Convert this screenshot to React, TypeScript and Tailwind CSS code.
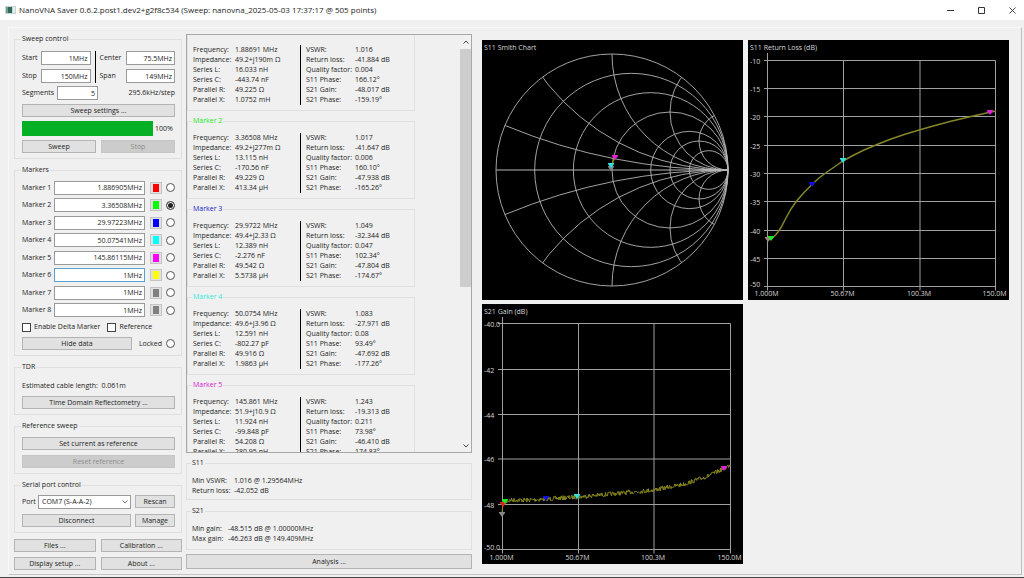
import { useId, useState } from "react";
import type { ButtonHTMLAttributes, InputHTMLAttributes, ReactNode } from "react";
import clsx from "clsx";

const markers = [
  { id: 1, value: "1.886905MHz", color: "bg-[#ff0000]" },
  { id: 2, value: "3.36508MHz", color: "bg-[#00ff00]" },
  { id: 3, value: "29.97223MHz", color: "bg-[#0000ff]" },
  { id: 4, value: "50.07541MHz", color: "bg-[#00ffff]" },
  { id: 5, value: "145.86115MHz", color: "bg-[#ff00ff]" },
  { id: 6, value: "1MHz", color: "bg-[#ffff00]" },
  { id: 7, value: "1MHz", color: "bg-[#808080]" },
  { id: 8, value: "1MHz", color: "bg-[#808080]" },
];

const leftLabels = ["Frequency:", "Impedance:", "Series L:", "Series C:", "Parallel R:", "Parallel X:"];
const rightLabels = ["VSWR:", "Return loss:", "Quality factor:", "S11 Phase:", "S21 Gain:", "S21 Phase:"];

const markerData = [
  {
    name: "Marker 1",
    color: "text-[#d02020]",
    left: ["1.88691 MHz", "49.2+j190m Ω", "16.033 nH", "-443.74 nF", "49.225 Ω", "1.0752 mH"],
    right: ["1.016", "-41.884 dB", "0.004", "166.12°", "-48.017 dB", "-159.19°"],
  },
  {
    name: "Marker 2",
    color: "text-[#20e820]",
    left: ["3.36508 MHz", "49.2+j277m Ω", "13.115 nH", "-170.56 nF", "49.229 Ω", "413.34 µH"],
    right: ["1.017", "-41.647 dB", "0.006", "160.10°", "-47.938 dB", "-165.26°"],
  },
  {
    name: "Marker 3",
    color: "text-[#1818c8]",
    left: ["29.9722 MHz", "49.4+j2.33 Ω", "12.389 nH", "-2.276 nF", "49.542 Ω", "5.5738 µH"],
    right: ["1.049", "-32.344 dB", "0.047", "102.34°", "-47.804 dB", "-174.67°"],
  },
  {
    name: "Marker 4",
    color: "text-[#30e8e0]",
    left: ["50.0754 MHz", "49.6+j3.96 Ω", "12.591 nH", "-802.27 pF", "49.916 Ω", "1.9863 µH"],
    right: ["1.083", "-27.971 dB", "0.08", "93.49°", "-47.692 dB", "-177.26°"],
  },
  {
    name: "Marker 5",
    color: "text-[#d818d0]",
    left: ["145.861 MHz", "51.9+j10.9 Ω", "11.924 nH", "-99.848 pF", "54.208 Ω", "280.95 nH"],
    right: ["1.243", "-19.313 dB", "0.211", "73.98°", "-46.410 dB", "174.83°"],
  },
];

type Point = [number, number];

const returnLossCurve: Point[] = [
  [20, 200], [23, 198.500], [26, 196.500], [28, 194.500], [30, 192], [33, 187.500], [38, 178], [43, 169],
  [49, 160.500], [56, 152.500], [64, 144.500], [71, 138], [79, 132], [87, 126.500], [95, 121], [105, 115.500],
  [116, 110], [129, 104.500], [143, 99], [157, 94.200], [172, 89.800], [187, 85.500], [203, 81.300],
  [223, 76.500], [243, 72], [248, 71],
];

const gainCurve: Point[] = [
  [21, 199], [29, 196], [46, 196], [64, 195], [95, 193], [129, 190], [172, 186], [203, 180],
  [226, 172], [243, 164], [249, 160],
];

// Samples the gain curve at every half pixel and adds receiver noise
function noisyGain(): Point[] {
  const points: Point[] = [[20, 210]];
  let seed = 7;
  for (let x = 21; x <= 248; x += 0.5) {
    const i = gainCurve.findIndex((p) => p[0] > x);
    const [x0, y0] = gainCurve[i - 1];
    const [x1, y1] = gainCurve[i];
    seed = (seed * 16807) % 2147483647;
    const noise = (seed / 2147483647 - 0.5) * 4.5;
    points.push([x, y0 + ((y1 - y0) * (x - x0)) / (x1 - x0) + noise]);
  }
  return points;
}

const gainTrace = noisyGain();

const toPoints = (points: Point[]) => points.map((p) => p.join(",")).join(" ");

function GroupBox({
  title,
  className,
  titleClassName,
  children,
}: {
  title: string;
  className?: string;
  titleClassName?: string;
  children: ReactNode;
}) {
  return (
    <fieldset className={clsx("min-w-0 border border-[#dfdfdf]", className)}>
      <legend className={clsx("-ml-px px-px leading-[10px]", titleClassName)}>{title}</legend>
      {children}
    </fieldset>
  );
}

function Button({ className, ...props }: ButtonHTMLAttributes<HTMLButtonElement>) {
  return (
    <button
      type="button"
      className={clsx(
        "flex h-[13px] items-center justify-center border border-[#b4b4b4] bg-[#e1e1e1] disabled:border-[#c6c6c6] disabled:bg-[#cccccc] disabled:text-[#8e8e8e]",
        className
      )}
      {...props}
    />
  );
}

function TextField({ className, ...props }: InputHTMLAttributes<HTMLInputElement>) {
  return (
    <input
      type="text"
      className={clsx(
        "h-[14px] w-full min-w-0 border bg-white pr-[2px] text-right outline-none",
        className ?? "border-[#9a9a9a]"
      )}
      {...props}
    />
  );
}

function Radio(props: InputHTMLAttributes<HTMLInputElement>) {
  return (
    <input
      type="radio"
      className="size-[9px] shrink-0 appearance-none rounded-full border border-[#555] bg-white checked:bg-[#222] checked:shadow-[inset_0_0_0_1px_white]"
      {...props}
    />
  );
}

function CheckBox({ label }: { label: string }) {
  return (
    <label className="flex items-center gap-[3px]">
      <input type="checkbox" className="size-[9px] appearance-none border border-[#444] bg-white checked:bg-[#444]" />
      {label}
    </label>
  );
}

function SweepControl() {
  const id = useId();
  return (
    <GroupBox title="Sweep control" className="pr-[6px] pb-[5px] pl-[7px]">
      <div className="flex flex-col gap-1 pt-[7px]">
        <div className="grid grid-cols-[15px_1fr_1px_22px_1fr] items-center gap-1">
          <label htmlFor={`${id}-start`}>Start</label>
          <TextField id={`${id}-start`} defaultValue="1MHz" />
          <div className="row-span-2 h-full bg-black" />
          <label htmlFor={`${id}-center`}>Center</label>
          <TextField id={`${id}-center`} defaultValue="75.5MHz" />
          <label htmlFor={`${id}-stop`}>Stop</label>
          <TextField id={`${id}-stop`} defaultValue="150MHz" />
          <label htmlFor={`${id}-span`}>Span</label>
          <TextField id={`${id}-span`} defaultValue="149MHz" />
        </div>
        <div className="-mt-px flex items-center justify-between">
          <label className="flex items-center">
            <span className="w-[35px]">Segments</span>
            <span className="flex w-[41px]">
              <TextField defaultValue="5" />
            </span>
          </label>
          <span>295.6kHz/step</span>
        </div>
        <Button>Sweep settings ...</Button>
        <div className="flex items-center gap-[2px]">
          <div
            role="progressbar"
            aria-label="Sweep progress"
            aria-valuenow={100}
            className="h-[15px] flex-1 bg-[#06b025]"
          />
          <span className="w-5">100%</span>
        </div>
        <div className="grid grid-cols-2 gap-[5px]">
          <Button>Sweep</Button>
          <Button disabled>Stop</Button>
        </div>
      </div>
    </GroupBox>
  );
}

function MarkerControl() {
  const [active, setActive] = useState(2);
  const id = useId();
  return (
    <GroupBox title="Markers" className="pr-[6px] pb-[5px] pl-[7px]">
      <div className="mt-1 grid h-[140px] auto-rows-fr items-center">
        {markers.map((marker) => (
          <div key={marker.id} className="flex items-center">
            <label htmlFor={`${id}-${marker.id}`} className="w-8 shrink-0">
              Marker {marker.id}
            </label>
            <TextField
              id={`${id}-${marker.id}`}
              defaultValue={marker.value}
              className={marker.id === 6 ? "border-[#5a9fd0]" : undefined}
            />
            <button
              type="button"
              aria-label={`Marker ${marker.id} colour`}
              className="mr-1 ml-[5px] flex size-3 shrink-0 items-center justify-center border border-[#c4c4c4] bg-[#e1e1e1]"
            >
              <span className={clsx("h-2 w-[6px]", marker.color)} />
            </button>
            <Radio
              name={`${id}-active`}
              aria-label={`Select marker ${marker.id}`}
              checked={active === marker.id}
              onChange={() => setActive(marker.id)}
            />
          </div>
        ))}
      </div>
      <div className="mt-[3px] flex gap-[7px]">
        <CheckBox label="Enable Delta Marker" />
        <CheckBox label="Reference" />
      </div>
      <div className="mt-[5px] flex items-center justify-between">
        <Button className="w-[110px]">Hide data</Button>
        <label className="flex items-center gap-1">
          Locked
          <Radio name={`${id}-locked`} />
        </label>
      </div>
    </GroupBox>
  );
}

function SerialControl() {
  return (
    <GroupBox title="Serial port control" className="pr-[6px] pb-[5px] pl-[7px]">
      <div className="grid grid-cols-[1fr_40px] gap-x-1 gap-y-[5px] pt-[5px]">
        <label className="flex items-center">
          <span className="w-4 shrink-0">Port</span>
          <span className="relative flex flex-1">
            <select className="h-[14px] w-full appearance-none border border-[#9a9a9a] bg-white pl-[3px] outline-none">
              <option>COM7 (S-A-A-2)</option>
            </select>
            <svg viewBox="0 0 6 4" className="absolute top-[5px] right-[3px] h-1 w-[6px]">
              <path d="M.5.5 3 3 5.500.5" fill="none" stroke="#555" strokeWidth=".8" />
            </svg>
          </span>
        </label>
        <Button>Rescan</Button>
        <Button>Disconnect</Button>
        <Button>Manage</Button>
      </div>
    </GroupBox>
  );
}

function MarkerReadout({ data }: { data: (typeof markerData)[number] }) {
  return (
    <GroupBox title={data.name} titleClassName={data.color} className="pb-[5px] pl-[5px]">
      <div className="grid grid-cols-[42px_65px_1px_50px_1fr] pt-[7px]">
        {leftLabels.map((label, i) => (
          <div key={label} className="col-span-5 grid grid-cols-subgrid">
            <span>{label}</span>
            <span>{data.left[i]}</span>
            <span className="bg-black" />
            <span className="pl-[5px]">{rightLabels[i]}</span>
            <span className="pl-1">{data.right[i]}</span>
          </div>
        ))}
      </div>
    </GroupBox>
  );
}

function DataColumn() {
  return (
    <div className="flex w-[286px] shrink-0 flex-col">
      <div className="flex min-h-0 flex-1 overflow-hidden border border-[#a8a8a8]">
        <div className="-mt-[7px] flex w-[228px] flex-col gap-[5px]">
          {markerData.map((data) => (
            <MarkerReadout key={data.name} data={data} />
          ))}
        </div>
        <div className="ml-auto flex w-[11px] flex-col items-center">
          <svg viewBox="0 0 6 4" className="my-[5px] h-1 w-[6px] shrink-0">
            <path d="M.5 3.500 3 1 5.500 3.500" fill="none" stroke="#444" />
          </svg>
          <div className="h-[238px] w-full bg-[#cdcdcd]" />
          <svg viewBox="0 0 6 4" className="mt-auto mb-1 h-1 w-[6px] shrink-0">
            <path d="M.5.5 3 3 5.500.5" fill="none" stroke="#444" />
          </svg>
        </div>
      </div>
      <GroupBox title="S11" className="mt-[5px] pb-[3px] pl-[5px]">
        <div className="grid grid-cols-[42px_1fr] pt-2">
          <span>Min VSWR:</span>
          <span>1.016 @ 1.29564MHz</span>
          <span>Return loss:</span>
          <span>-42.052 dB</span>
        </div>
      </GroupBox>
      <GroupBox title="S21" className="mt-[6px] pb-[5px] pl-[5px]">
        <div className="grid grid-cols-[36px_1fr] pt-2">
          <span>Min gain:</span>
          <span>-48.515 dB @ 1.00000MHz</span>
          <span>Max gain:</span>
          <span>-46.263 dB @ 149.409MHz</span>
        </div>
      </GroupBox>
      <Button className="mt-1 h-[15px] shrink-0">Analysis ...</Button>
    </div>
  );
}

function ChartFrame({ title, children }: { title: string; children: ReactNode }) {
  return (
    <svg viewBox="0 0 261 260" className="w-full bg-black text-[7px]" role="img" aria-label={title}>
      <text x="2" y="10" fill="#d8d8d8">
        {title}
      </text>
      {children}
    </svg>
  );
}

function MarkerPin({ x, y, color }: { x: number; y: number; color: string }) {
  return <path d={`M${x} ${y}l-3-4v-1h6v1z`} fill={color} />;
}

function SmithChart() {
  const cx = 130;
  const cy = 130;
  const r = 116;
  return (
    <ChartFrame title="S11 Smith Chart">
      <clipPath id="smith-rim">
        <circle cx={cx} cy={cy} r={r} />
      </clipPath>
      <g fill="none" stroke="#b4b4b4" strokeWidth=".9">
        <circle cx={cx} cy={cy} r={r} />
        {[0.2, 0.5, 1, 2, 3, 5].map((z) => (
          <circle key={z} cx={cx + (r * z) / (1 + z)} cy={cy} r={r / (1 + z)} />
        ))}
        <g clipPath="url(#smith-rim)">
          {[0.2, 0.5, 1, 2, 4, -0.2, -0.5, -1, -2, -4].map((x) => (
            <circle key={x} cx={cx + r} cy={cy - r / x} r={r / Math.abs(x)} />
          ))}
        </g>
        <path d={`M${cx - r} ${cy}h${2 * r}`} stroke="#b8b8b8" strokeWidth="1" />
      </g>
      <path d="M129 129q1-7 4-11" fill="none" stroke="#808000" strokeWidth="1.500" />
      <MarkerPin x={129} y={131} color="#808080" />
      <MarkerPin x={129} y={128} color="#30e0e0" />
      <MarkerPin x={133} y={120} color="#e020d8" />
    </ChartFrame>
  );
}

function Grid({ xs, ys, labels }: { xs: number[]; ys: number[]; labels: string[] }) {
  const right = xs[xs.length - 1];
  const bottom = ys[ys.length - 1];
  return (
    <>
      <g stroke="#a0a0a0" fill="none">
        <path d={`M${xs[0]} 13V${bottom + 4}`} />
        {xs.slice(1).map((x) => (
          <path key={x} d={`M${x} ${ys[0]}V${bottom + 4}`} />
        ))}
        {ys.map((y) => (
          <path key={y} d={`M16 ${y}H${right}`} />
        ))}
      </g>
      <g fill="#d8d8d8">
        {labels.map((label, i) => (
          <text key={label} x="2" y={i === labels.length - 1 ? ys[i] : ys[i] + 3}>
            {label}
          </text>
        ))}
        {["1.000M", "50.67M", "100.3M", "150.0M"].map((label, i) => (
          <text key={label} x={xs[i] - 1} y="256" textAnchor="middle">
            {label}
          </text>
        ))}
      </g>
    </>
  );
}

function ReturnLossChart() {
  return (
    <ChartFrame title="S11 Return Loss (dB)">
      <Grid
        xs={[19.5, 95.5, 172, 247.5]}
        ys={[20.5, 48.5, 76.5, 105.5, 133.5, 161.5, 190.5, 218.5, 246.5]}
        labels={["-10", "-15", "-20", "-25", "-30", "-35", "-40", "-45", "-50"]}
      />
      <polyline points={toPoints(returnLossCurve)} fill="none" stroke="#85852a" strokeWidth="1.500" />
      <MarkerPin x={20} y={202} color="#a08080" />
      <MarkerPin x={23} y={201} color="#20e820" />
      <MarkerPin x={64} y={147} color="#1010e0" />
      <MarkerPin x={95} y={123} color="#30e0e0" />
      <MarkerPin x={242} y={75} color="#e020d8" />
    </ChartFrame>
  );
}

function GainChart() {
  return (
    <ChartFrame title="S21 Gain (dB)">
      <Grid
        xs={[20.5, 96.5, 172, 248.5]}
        ys={[19.5, 65.5, 110.5, 155, 200.5, 245.5]}
        labels={["-40.0", "-42", "-44", "-46", "-48", "-50.0"]}
      />
      <polyline points={toPoints(gainTrace)} fill="none" stroke="#8a8a20" />
      <MarkerPin x={20} y={213} color="#888888" />
      <MarkerPin x={21} y={203} color="#e02020" />
      <MarkerPin x={23} y={200} color="#20e820" />
      <MarkerPin x={64} y={197} color="#1010e0" />
      <MarkerPin x={95} y={195} color="#30e0e0" />
      <MarkerPin x={242} y={167} color="#e020d8" />
    </ChartFrame>
  );
}

function TitleBar() {
  return (
    <header className="flex h-5 shrink-0 items-center bg-white px-[5px]">
      <svg viewBox="0 0 11 8" className="mr-[3px] h-2 w-[11px]">
        <rect width="11" height="8" fill="#c8d4d4" />
        <rect x="1" y="1" width="6" height="6" fill="#2f6b5c" />
        <rect x="1" y="1" width="2" height="6" fill="#6fa08c" />
        <rect x="8" y="1" width="2" height="6" fill="#e8eeee" />
      </svg>
      <h1 className="text-[8px]">
        NanoVNA Saver 0.6.2.post1.dev2+g2f8c534 (Sweep: nanovna_2025-05-03 17:37:17 @ 505 points)
      </h1>
      <div className="ml-auto flex gap-6 pr-[3px]">
        <button type="button" aria-label="Minimize">
          <svg viewBox="0 0 7 7" className="size-[7px]">
            <path d="M0 3.500h7" stroke="#333" />
          </svg>
        </button>
        <button type="button" aria-label="Maximize">
          <svg viewBox="0 0 7 7" className="size-[7px]">
            <path d="M.5.5h6v6h-6z" fill="none" stroke="#333" />
          </svg>
        </button>
        <button type="button" aria-label="Close">
          <svg viewBox="0 0 7 7" className="size-[7px]">
            <path d="m.5.5 6 6m0-6-6 6" stroke="#333" strokeWidth=".9" />
          </svg>
        </button>
      </div>
    </header>
  );
}

export default function App() {
  return (
    <div className="flex h-screen flex-col overflow-hidden border-b border-[#444] bg-[#f0f0f0] font-['Open_Sans','Noto_Sans',sans-serif] text-[7px] leading-[10px] whitespace-nowrap text-[#1c1c1c]">
      <TitleBar />
      <main className="mt-[7px] mr-[2px] mb-[2px] ml-2 flex min-h-0 flex-1 border border-t-[#f8f8f8] border-r-[#bdbdbd] border-b-[#c4c4c4] border-l-[#f8f8f8] pt-[6px] pr-[12px] pb-[5px] pl-[5px]">
        <div className="flex w-[168px] shrink-0 flex-col gap-[6px]">
          <SweepControl />
          <MarkerControl />
          <GroupBox title="TDR" className="pr-[6px] pb-[5px] pl-[7px]">
            <p className="pt-[9px]">Estimated cable length:&nbsp; 0.061m</p>
            <Button className="mt-[5px] w-full">Time Domain Reflectometry ...</Button>
          </GroupBox>
          <GroupBox title="Reference sweep" className="pr-[6px] pb-[5px] pl-[7px]">
            <div className="flex flex-col gap-[5px] pt-[6px]">
              <Button>Set current as reference</Button>
              <Button disabled>Reset reference</Button>
            </div>
          </GroupBox>
          <SerialControl />
          <div className="grid grid-cols-2 gap-[5px]">
            <Button>Files ...</Button>
            <Button>Calibration ...</Button>
            <Button>Display setup ...</Button>
            <Button>About ...</Button>
          </div>
        </div>
        <div className="ml-1 flex">
          <DataColumn />
        </div>
        <div className="ml-[10px] grid min-w-0 flex-1 grid-cols-2 content-start gap-x-[5px] gap-y-1 pt-[6px]">
          <SmithChart />
          <ReturnLossChart />
          <GainChart />
        </div>
      </main>
    </div>
  );
}
